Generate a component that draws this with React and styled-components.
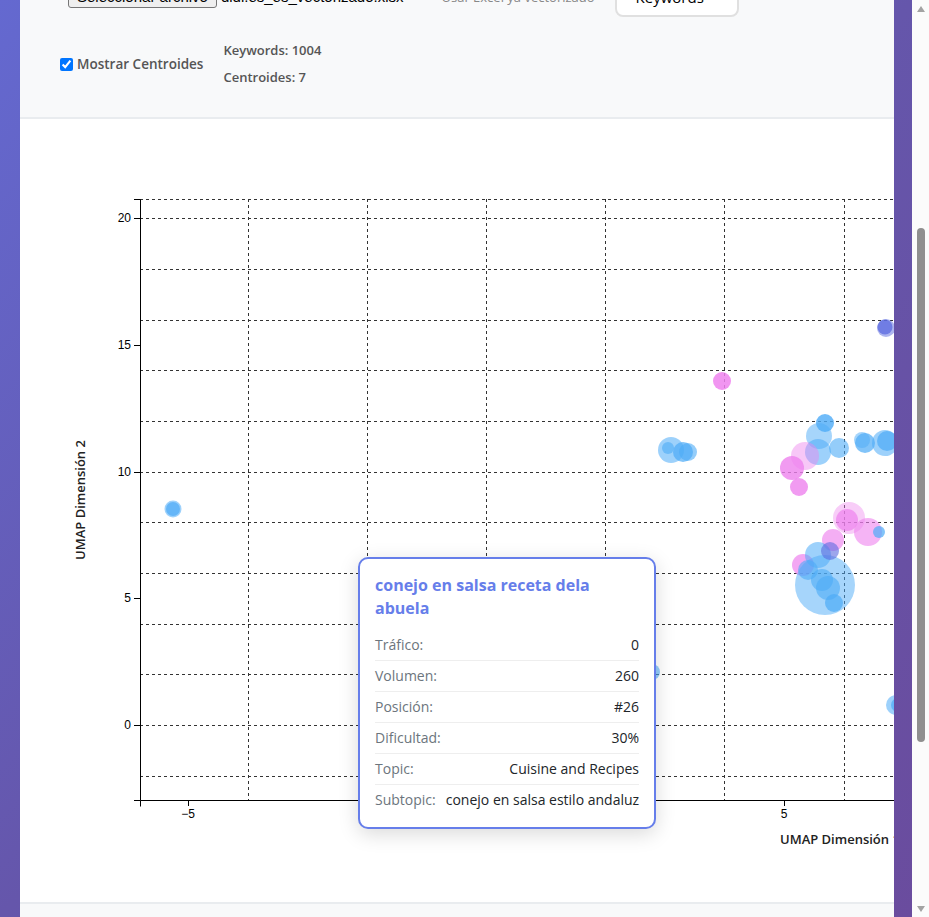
import React from "react";
import styled, { createGlobalStyle } from "styled-components";

const UI = `"Open Sans", "Noto Sans", "Liberation Sans", sans-serif`;

const GlobalStyle = createGlobalStyle`
  html, body { margin: 0; padding: 0; overflow: hidden; }
  body { font-family: ${UI}; color: #333; }
  * { box-sizing: border-box; }
`;

const Viewport = styled.div`
  display: flex;
  height: 917px;
  width: 929px;
  overflow: hidden;
`;

const PageArea = styled.div`
  flex: 1;
  overflow: hidden;
  padding: 0 18px 0 20px;
  background: linear-gradient(135deg, #6469d0 0%, #6556ab 50%, #6a4c9e 100%);
`;

const Card = styled.div`
  margin-top: -49px;
  background: #fff;
  overflow: hidden;
`;

const Controls = styled.div`
  background: #f8f9fa;
  padding: 25px 40px 26px;
  border-bottom: 2px solid #e9ecef;
  display: flex;
  flex-direction: column;
  gap: 20px;
`;

const TopRow = styled.div`
  display: flex;
  align-items: center;
  padding-left: 8px;
  height: 41px;
`;

const FileButton = styled.span`
  display: inline-flex;
  align-items: center;
  height: 23px;
  padding: 0 8px;
  font-family: "Liberation Sans", Arial, sans-serif;
  font-size: 15px;
  color: #000;
  background: #efefef;
  border: 1px solid #767676;
  border-radius: 3px;
`;

const FileName = styled.span`
  margin-left: 4px;
  font-family: "Liberation Sans", Arial, sans-serif;
  font-size: 15px;
  color: #000;
`;

const Hint = styled.span`
  margin-left: 38px;
  font-size: 13px;
  color: #888;
`;

const SelectBox = styled.div`
  margin-left: 20px;
  width: 124px;
  height: 41px;
  display: flex;
  align-items: center;
  justify-content: space-between;
  padding: 0 8px 0 19px;
  background: #fff;
  border: 2px solid #e0e0e0;
  border-radius: 8px;
  font-size: 15px;
  color: #000;
`;

const OptionRow = styled.div`
  display: flex;
  align-items: center;
  gap: 20px;
`;

const CheckLabel = styled.label`
  display: flex;
  align-items: center;
  gap: 4px;
  font-size: 13.5px;
  font-weight: 600;
  color: #555;
  input { margin: 0; width: 13px; height: 13px; }
`;

const Stats = styled.div`
  display: flex;
  flex-direction: column;
`;

const Stat = styled.div`
  font-size: 13px;
  line-height: 19px;
  margin: 4px 0;
  font-weight: 600;
  color: #555;
`;

const ChartSection = styled.div`
  position: relative;
  padding: 20px;
  display: flex;
`;

const ChartSvg = styled.svg`
  flex-shrink: 0;
  display: block;
  overflow: hidden;
`;

const Tooltip = styled.div`
  position: absolute;
  left: 338px;
  top: 438px;
  width: 298px;
  background: #fff;
  border: 2px solid #667eea;
  border-radius: 10px;
  padding: 15px 15px 12px;
  box-shadow: 0 5px 20px rgba(0, 0, 0, 0.15);
`;

const TipTitle = styled.div`
  font-size: 16px;
  line-height: 23px;
  font-weight: 700;
  color: #667eea;
  margin-bottom: 10px;
`;

const TipRow = styled.div`
  display: flex;
  justify-content: space-between;
  gap: 10px;
  padding: 7px 0;
  font-size: 14px;
  line-height: 16px;
  border-bottom: 1px solid #eee;
  &:last-child { border-bottom: none; }
`;

const TipLabel = styled.span`
  color: #6c757d;
  font-weight: 500;
  white-space: nowrap;
`;

const TipValue = styled.span`
  color: #212529;
  font-weight: 500;
  white-space: nowrap;
`;

const Footer = styled.div`
  height: 80px;
  background: #f8f9fa;
  border-top: 2px solid #e9ecef;
`;

const Scrollbar = styled.div`
  width: 17px;
  background: #fbfbfb;
  display: flex;
  flex-direction: column;
`;

const Arrow = styled.div`
  height: 17px;
  display: flex;
  align-items: center;
  justify-content: center;
  padding-left: 1px;
  &::before {
    content: "";
    border-left: 4.5px solid transparent;
    border-right: 4.5px solid transparent;
    ${(p) => (p.$down ? "border-top" : "border-bottom")}: 6px solid #a3a3a3;
  }
`;

const Track = styled.div`
  flex: 1;
  padding-top: 211px;
`;

const Thumb = styled.div`
  margin-left: 5px;
  width: 8px;
  height: 514px;
  border-radius: 4px;
  background: #8f8f8f;
`;

const B = "#4dabf7";
const P = "#ee82ee";
const I = "#5c6be0";

// page coordinates [x, y, r, color, opacity]
const bubbles = [
  [173, 509, 8.5, B, 0.55],
  [173, 509, 7, B, 0.7],
  [722, 381, 9, P, 0.85],
  [886, 328, 9, I, 0.5],
  [885, 327, 7.5, I, 0.75],
  [652, 672, 8, B, 0.6],
  [671, 450, 13, B, 0.55],
  [668, 448, 6, B, 0.6],
  [683, 452, 10, B, 0.7],
  [688, 452, 9, B, 0.6],
  [819, 436, 13, B, 0.5],
  [825, 423, 9, B, 0.8],
  [818, 452, 13, B, 0.55],
  [839, 448, 10, B, 0.6],
  [805, 456, 14, P, 0.45],
  [792, 468, 12, P, 0.8],
  [799, 487, 9, P, 0.8],
  [865, 443, 10, B, 0.7],
  [862, 440, 8, B, 0.5],
  [885, 443, 13, B, 0.55],
  [887, 441, 10, B, 0.7],
  [849, 518, 16, P, 0.4],
  [847, 520, 11, P, 0.7],
  [868, 532, 14, P, 0.6],
  [879, 532, 6, B, 0.7],
  [833, 540, 11, P, 0.65],
  [803, 565, 11, P, 0.7],
  [825, 585, 30, B, 0.5],
  [818, 555, 13, B, 0.55],
  [830, 551, 9, I, 0.6],
  [808, 570, 10, B, 0.6],
  [822, 580, 11, B, 0.6],
  [828, 588, 12, B, 0.6],
  [834, 603, 9, B, 0.7],
  [896, 705, 10, B, 0.55],
  [898, 705, 7, B, 0.7],
];

const OX = 40;
const OY = 139;
const xs = (v) => 148 + (v + 5) * 59.6;
const ys = (v) => 586 - v * 25.33;
const TOP = 60;
const BOTTOM = 661;
const LEFT = 100;
const RIGHT = 900;

const hGrid = [-2, 0, 2, 4, 6, 8, 10, 12, 14, 16, 18, 20];
const vGrid = [-4, -2, 0, 2, 4, 6, 8];
const yTicks = [0, 5, 10, 15, 20];
const xTicks = [-5, 0, 5, 10];
const xLabels = [-5, 5, 10];

const rows = [
  ["Tráfico:", "0"],
  ["Volumen:", "260"],
  ["Posición:", "#26"],
  ["Dificultad:", "30%"],
  ["Topic:", "Cuisine and Recipes"],
  ["Subtopic:", "conejo en salsa estilo andaluz"],
];

function Chart() {
  return (
    <ChartSvg width={900} height={743} viewBox="0 0 900 743">
      <g stroke="#333" strokeWidth="1" strokeDasharray="3,3" fill="none">
        <line x1={LEFT} x2={RIGHT} y1={TOP + 0.5} y2={TOP + 0.5} />
        {hGrid.map((v) => (
          <line key={"h" + v} x1={LEFT} x2={RIGHT} y1={Math.round(ys(v)) + 0.5} y2={Math.round(ys(v)) + 0.5} />
        ))}
        {vGrid.map((v) => (
          <line key={"v" + v} x1={Math.round(xs(v)) + 0.5} x2={Math.round(xs(v)) + 0.5} y1={TOP} y2={BOTTOM} />
        ))}
      </g>
      <g stroke="#000" fill="none" strokeWidth="1">
        <path d={`M${LEFT - 6},${TOP + 0.5}H${LEFT + 0.5}V${BOTTOM + 0.5}H${LEFT - 6}`} />
        <path d={`M${LEFT + 0.5},${BOTTOM + 6.5}V${BOTTOM + 0.5}H${RIGHT}`} />
        {yTicks.map((v) => (
          <line key={"yt" + v} x1={LEFT - 6} x2={LEFT} y1={Math.round(ys(v)) + 0.5} y2={Math.round(ys(v)) + 0.5} />
        ))}
        {xTicks.map((v) => (
          <line key={"xt" + v} x1={Math.round(xs(v)) + 0.5} x2={Math.round(xs(v)) + 0.5} y1={BOTTOM} y2={BOTTOM + 6} />
        ))}
      </g>
      <g fontFamily='"Liberation Sans", Arial, sans-serif' fontSize="12" fill="#000">
        {yTicks.map((v) => (
          <text key={"yl" + v} x={LEFT - 9} y={ys(v)} dy="0.32em" textAnchor="end">{v}</text>
        ))}
        {xLabels.map((v) => (
          <text key={"xl" + v} x={xs(v)} y={BOTTOM + 9} dy="0.71em" textAnchor="middle">
            {v < 0 ? "\u2212" + Math.abs(v) : v}
          </text>
        ))}
      </g>
      <g>
        {bubbles.map(([x, y, r, c, o], i) => (
          <circle key={i} cx={x - OX} cy={y - OY} r={r} fill={c} fillOpacity={o} />
        ))}
      </g>
      <g fontFamily={UI} fontSize="13" fontWeight="600" fill="#222">
        <text x={40} y={361} textAnchor="middle" dy="0.35em" transform="rotate(-90 40 361)">UMAP Dimensión 2</text>
        <text x={740} y={700} dy="0.35em">UMAP Dimensión 1</text>
      </g>
    </ChartSvg>
  );
}

export default function App() {
  return (
    <>
      <GlobalStyle />
      <Viewport>
        <PageArea>
          <Card>
            <Controls>
              <TopRow>
                <FileButton>Seleccionar archivo</FileButton>
                <FileName>didi.es_es_vectorizado.xlsx</FileName>
                <Hint>Usar Excel ya vectorizado</Hint>
                <SelectBox>
                  <span>Keywords</span>
                  <svg width="8" height="5" viewBox="0 0 8 5"><path d="M0 0L4 5L8 0Z" fill="#888" /></svg>
                </SelectBox>
              </TopRow>
              <OptionRow>
                <CheckLabel>
                  <input type="checkbox" checked readOnly />
                  Mostrar Centroides
                </CheckLabel>
                <Stats>
                  <Stat>Keywords: 1004</Stat>
                  <Stat>Centroides: 7</Stat>
                </Stats>
              </OptionRow>
            </Controls>
            <ChartSection>
              <Chart />
              <Tooltip>
                <TipTitle>conejo en salsa receta dela abuela</TipTitle>
                {rows.map(([l, v]) => (
                  <TipRow key={l}>
                    <TipLabel>{l}</TipLabel>
                    <TipValue>{v}</TipValue>
                  </TipRow>
                ))}
              </Tooltip>
            </ChartSection>
            <Footer />
          </Card>
        </PageArea>
        <Scrollbar>
          <Arrow />
          <Track><Thumb /></Track>
          <Arrow $down />
        </Scrollbar>
      </Viewport>
    </>
  );
}
